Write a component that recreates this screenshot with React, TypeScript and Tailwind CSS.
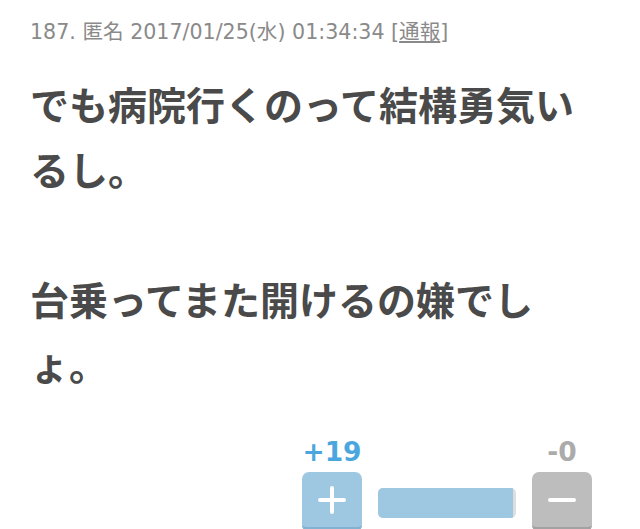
const jp = { fontFamily: '"Noto Sans CJK JP", "Noto Sans", sans-serif' };
const meta = { fontFamily: '"DejaVu Sans", "Noto Sans CJK JP", sans-serif' };

function VoteButton({ kind }: { kind: "plus" | "minus" }) {
  const plus = kind === "plus";
  return (
    <button
      className={
        "flex h-[60px] w-[60px] items-center justify-center rounded-[7px] border-b-[5px] " +
        (plus ? "border-[#82b2cf] bg-[#9ec8e1]" : "border-[#a2a2a2] bg-[#bdbdbd]")
      }
    >
      <svg width="28" height="28" viewBox="0 0 28 28" fill="none" stroke="#fff" strokeWidth="4" strokeLinecap="round">
        <line x1="2" y1="14" x2="26" y2="14" />
        {plus && <line x1="14" y1="2" x2="14" y2="26" />}
      </svg>
    </button>
  );
}

export default function App() {
  const good = 19;
  const bad = 0;
  const ratio = good + bad === 0 ? 50 : (good / (good + bad)) * 100;

  return (
    <div className="h-[529px] w-[640px] overflow-hidden bg-white px-[30px] pt-[17px]">
      <div className="text-[20.6px] leading-[30px] text-[#8a8a8a]" style={meta}>
        187. 匿名 2017/01/25(水) 01:34:34 [<span className="underline">通報</span>]
      </div>

      <p className="mt-[24px] text-[39px] font-bold leading-[65px] text-[#4a4a4a]" style={jp}>
        でも病院行くのって結構勇気いるし。
        <br />
        <br />
        台乗ってまた開けるの嫌でしょ。
      </p>

      <div className="mt-[41px] mr-[18px] flex items-end justify-end gap-[16px]" style={meta}>
        <div className="flex w-[60px] flex-col items-center gap-[5px]">
          <span className="text-[26.5px] font-bold leading-[30px] text-[#4ba6de]">+{good}</span>
          <VoteButton kind="plus" />
        </div>
        <div className="mb-[14px] flex h-[30px] w-[138px] overflow-hidden rounded-[5px] bg-[#dedede]">
          <div className="h-full bg-[#9ec8e1]" style={{ width: `${Math.min(ratio, 97.8)}%` }} />
        </div>
        <div className="flex w-[60px] flex-col items-center gap-[5px]">
          <span className="text-[26.5px] font-bold leading-[30px] text-[#ababab]">-{bad}</span>
          <VoteButton kind="minus" />
        </div>
      </div>
    </div>
  );
}
